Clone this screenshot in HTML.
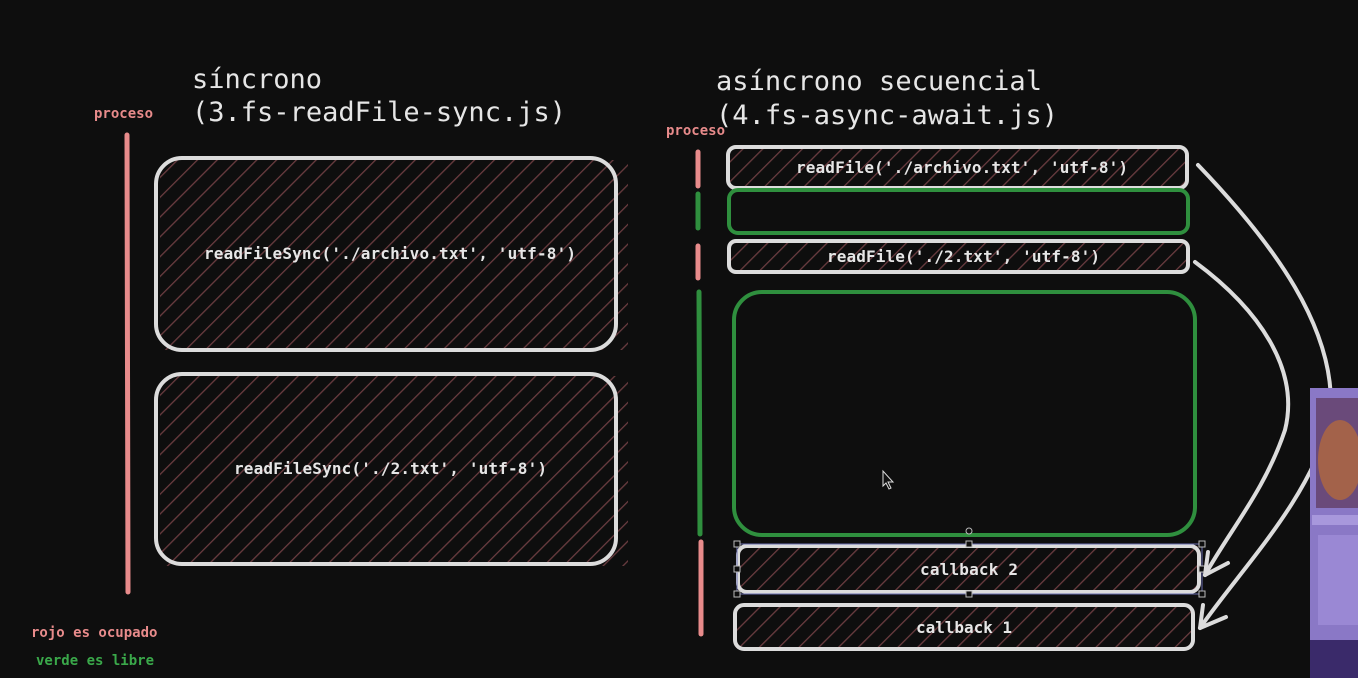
<!DOCTYPE html>
<html><head><meta charset="utf-8"><style>
html,body{margin:0;padding:0;background:#0e0e0e;width:1358px;height:678px;overflow:hidden}
svg{display:block}
.m{font-family:"DejaVu Sans Mono","Liberation Mono",monospace}
</style></head><body>
<svg width="1358" height="678" viewBox="0 0 1358 678" xmlns="http://www.w3.org/2000/svg">
<defs>
<pattern id="h" width="14" height="14" patternUnits="userSpaceOnUse" patternTransform="rotate(45)">
<line x1="0" y1="0" x2="0" y2="14" stroke="#6a3c40" stroke-width="2.6"/>
</pattern>
</defs>
<rect width="1358" height="678" fill="#0e0e0e"/>
<g class="m" fill="#e6e6e6" font-size="27">
<text x="192" y="88" textLength="130">síncrono</text>
<text x="192" y="121" textLength="374">(3.fs-readFile-sync.js)</text>
<text x="716" y="90" textLength="326">asíncrono secuencial</text>
<text x="716" y="124" textLength="342">(4.fs-async-await.js)</text>
</g>
<g class="m" font-size="14" font-weight="bold">
<text x="94" y="118" fill="#e88b8b">proceso</text>
<text x="666" y="135" fill="#e88b8b">proceso</text>
<text x="31" y="637" fill="#e88b8b">rojo es ocupado</text>
<text x="36" y="665" fill="#3aa84a">verde es libre</text>
</g>
<line x1="127" y1="135" x2="128" y2="592" stroke="#e88b8b" stroke-width="5" stroke-linecap="round"/>
<rect x="160" y="160" width="468" height="190" fill="url(#h)"/>
<rect x="156" y="158" width="460" height="192" rx="26" fill="none" stroke="#dcdcdc" stroke-width="4"/>
<rect x="160" y="376" width="468" height="190" fill="url(#h)"/>
<rect x="156" y="374" width="460" height="190" rx="26" fill="none" stroke="#dcdcdc" stroke-width="4"/>
<g class="m" fill="#e6e6e6" font-size="16" font-weight="bold">
<text x="204" y="259" textLength="372">readFileSync('./archivo.txt', 'utf-8')</text>
<text x="234" y="474" textLength="313">readFileSync('./2.txt', 'utf-8')</text>
</g>
<g stroke-width="5" stroke-linecap="round">
<line x1="698" y1="152" x2="698" y2="186" stroke="#e88b8b"/>
<line x1="698" y1="194" x2="698" y2="228" stroke="#2f8f3e"/>
<line x1="698" y1="246" x2="698" y2="278" stroke="#e88b8b"/>
<line x1="699" y1="292" x2="700" y2="534" stroke="#2f8f3e"/>
<line x1="701" y1="542" x2="701" y2="634" stroke="#e88b8b"/>
</g>
<rect x="729" y="148" width="458" height="40" fill="url(#h)"/>
<rect x="728" y="147" width="459" height="41" rx="8" fill="none" stroke="#dcdcdc" stroke-width="4"/>
<rect x="729" y="190" width="459" height="43" rx="9" fill="none" stroke="#2f8f3e" stroke-width="4"/>
<rect x="729" y="242" width="458" height="30" fill="url(#h)"/>
<rect x="729" y="241" width="459" height="31" rx="7" fill="none" stroke="#dcdcdc" stroke-width="4"/>
<rect x="734" y="292" width="461" height="243" rx="28" fill="none" stroke="#2f8f3e" stroke-width="4"/>
<rect x="738" y="546" width="461" height="46" fill="url(#h)"/>
<rect x="738" y="546" width="461" height="46" rx="9" fill="none" stroke="#dcdcdc" stroke-width="4"/>
<rect x="737" y="544" width="465" height="50" fill="none" stroke="#6a6fb0" stroke-width="1"/>
<g fill="#0e0e0e" stroke="#bbb" stroke-width="1">
<rect x="734" y="541" width="6" height="6"/><rect x="1199" y="541" width="6" height="6"/>
<rect x="734" y="591" width="6" height="6"/><rect x="1199" y="591" width="6" height="6"/>
<rect x="966" y="541" width="6" height="6"/><rect x="966" y="591" width="6" height="6"/>
<rect x="734" y="566" width="6" height="6"/><rect x="1199" y="566" width="6" height="6"/>
<circle cx="969" cy="531" r="3"/>
</g>
<rect x="735" y="605" width="458" height="44" fill="url(#h)"/>
<rect x="735" y="605" width="458" height="44" rx="9" fill="none" stroke="#dcdcdc" stroke-width="4"/>
<g class="m" fill="#e6e6e6" font-size="16" font-weight="bold">
<text x="796" y="173" textLength="332">readFile('./archivo.txt', 'utf-8')</text>
<text x="827" y="262" textLength="273">readFile('./2.txt', 'utf-8')</text>
<text x="920" y="575" textLength="98">callback 2</text>
<text x="916" y="633" textLength="96">callback 1</text>
</g>
<g fill="none" stroke="#dcdcdc" stroke-width="4" stroke-linecap="round">
<path d="M1198 165 C1270 240 1340 330 1330 420 C1310 500 1240 570 1200 628"/>
<path d="M1195 262 C1260 310 1300 370 1285 430 C1265 490 1230 530 1205 575"/>
<path d="M1205 575 L1208 552 M1205 575 L1228 563"/>
<path d="M1200 628 L1203 605 M1200 628 L1226 617"/>
</g>
<path d="M883 471 L883 486 L886 483 L889 489 L891 488 L888 482 L893 482 Z" fill="#111" stroke="#ddd" stroke-width="1"/>
<rect x="1310" y="388" width="48" height="290" fill="#8a78c6"/>
<rect x="1316" y="398" width="42" height="110" fill="#6a4a7a"/>
<ellipse cx="1340" cy="460" rx="22" ry="40" fill="#a3624a"/>
<rect x="1312" y="515" width="46" height="10" fill="#a898dc"/>
<rect x="1318" y="535" width="40" height="90" fill="#9a88d4"/>
<rect x="1310" y="640" width="48" height="38" fill="#3a2a6a"/>
</svg>
</body></html>
